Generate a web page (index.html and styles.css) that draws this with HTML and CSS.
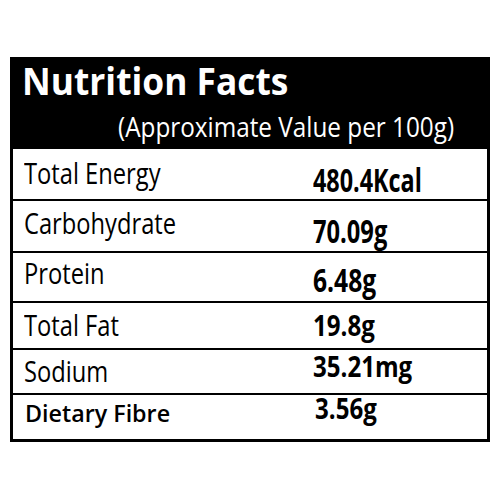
FILE: index.html
```html
<!DOCTYPE html>
<html>
<head>
<meta charset="utf-8">
<link rel="stylesheet" href="styles.css">
</head>
<body>
<div class="card">
  <div class="head">
    <div class="title"><span class="sq">Nutrition Facts</span></div>
    <div class="sub"><span class="sq">(Approximate Value per 100g)</span></div>
  </div>
  <div class="row r1"><div class="lab"><span class="sq">Total Energy</span></div><div class="val"><span class="sq">480.4Kcal</span></div></div>
  <div class="row r2"><div class="lab"><span class="sq">Carbohydrate</span></div><div class="val"><span class="sq">70.09g</span></div></div>
  <div class="row r3"><div class="lab"><span class="sq">Protein</span></div><div class="val"><span class="sq">6.48g</span></div></div>
  <div class="row r4"><div class="lab"><span class="sq">Total Fat</span></div><div class="val"><span class="sq">19.8g</span></div></div>
  <div class="row r5"><div class="lab"><span class="sq">Sodium</span></div><div class="val"><span class="sq">35.21mg</span></div></div>
  <div class="row r6"><div class="lab"><span class="sq">Dietary Fibre</span></div><div class="val"><span class="sq">3.56g</span></div></div>
</div>
</body>
</html>
```
FILE: styles.css
```css
html, body {
  margin: 0;
  padding: 0;
  background: #fff;
}
body {
  font-family: "Open Sans", "Liberation Sans", sans-serif;
  color: #000;
}
.card {
  margin: 57px 0 0 10px;
  width: 480px;
  box-sizing: border-box;
  border: 3px solid #000;
  border-top: 0;
}
.sq {
  display: inline-block;
  white-space: nowrap;
  transform-origin: 0 50%;
  transform: scaleX(var(--sx, 1));
}
.head {
  background: #000;
  color: #fff;
  height: 92px;
  box-sizing: border-box;
  padding-top: 4px;
}
.title {
  font-weight: 700;
  font-size: 38px;
  line-height: 38px;
  padding-left: 9px;
  --sx: 0.93;
}
.sub {
  font-size: 27px;
  line-height: 27px;
  margin-top: 14px;
  padding-left: 105px;
  --sx: 0.9;
}
.row {
  display: flex;
  align-items: flex-start;
  border-bottom: 2px solid #000;
  box-sizing: border-box;
}
.row:last-child {
  border-bottom: 0;
}
.lab {
  width: 289px;
  flex: none;
  padding-left: 11px;
  box-sizing: border-box;
  padding-top: var(--lt);
  font-size: 30px;
  line-height: 30px;
  --sx: 0.79;
}
.val {
  font-weight: 700;
  font-size: 32px;
  line-height: 32px;
  margin-top: var(--vt);
  padding-left: 11px;
  --sx: 0.73;
}
.r1 { height: 52px; --lt: 9px; --vt: 15px; }
.r2 { height: 52px; --lt: 7px; --vt: 14px; }
.r3 { height: 50px; --lt: 5px; --vt: 11px; }
.r4 { height: 47px; --lt: 7px; --vt: 8px; }
.r5 { height: 45px; --lt: 6px; --vt: 2px; }
.r6 { height: 44px; --lt: 8px; --vt: -1px; }
.r2 .val { --sx: 0.74; }
.r3 .val { --sx: 0.77; }
.r6 .lab {
  font-size: 24px;
  line-height: 24px;
  font-weight: 600;
  padding-left: 12px;
  padding-top: 6px;
  --sx: 0.97;
}
.r4 .val, .r5 .val, .r6 .val {
  font-size: 28px;
  line-height: 28px;
  --sx: 0.86;
}
.r6 .val { padding-left: 13px; }
```
